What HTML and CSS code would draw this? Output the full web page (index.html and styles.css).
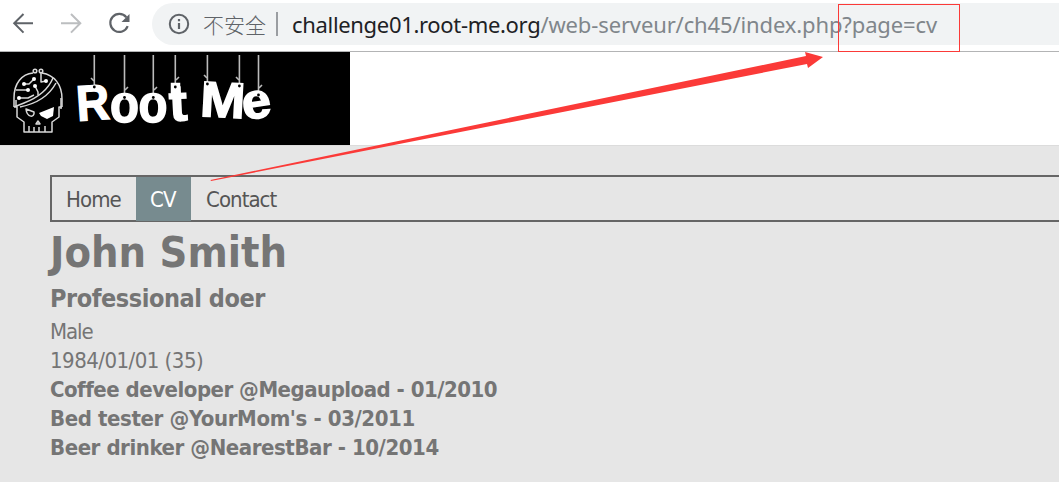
FILE: index.html
```html
<!DOCTYPE html>
<html lang="en">
<head>
<meta charset="utf-8">
<title>Root Me</title>
<link rel="stylesheet" href="styles.css">
</head>
<body>
<div class="toolbar">
  <svg class="tools" width="152" height="51" viewBox="0 0 152 51" fill="none">
    <g stroke="#5f6368" stroke-width="2"><path d="M33 23.3H14.5M23.5 14L14.2 23.3L23.5 32.6"/></g>
    <g stroke="#bcbec0" stroke-width="2"><path d="M61 23.3H80M71 14L80.3 23.3L71 32.6"/></g>
    <path d="M126.3 17.2A9 9 0 1 0 127.7 26.2" stroke="#5f6368" stroke-width="2.2"/>
    <path d="M129.5 14V22H121.5Z" fill="#5f6368"/>
  </svg>
  <div class="address">
    <svg class="info" width="22" height="22" viewBox="0 0 22 22" fill="none" stroke="#5f6368" stroke-width="2"><circle cx="11" cy="11" r="9.2"/><path d="M11 10V16M11 6V8.2" stroke-width="2.2"/></svg>
    <span class="insecure">不安全</span>
    <span class="divider"></span>
    <span class="url"><span class="host">challenge01.root-me.org</span><span class="path">/web-serveur/ch45/index.php?page=cv</span></span>
  </div>
</div>
<header class="banner">
  <svg class="logo" width="350" height="93" viewBox="0 52 350 93">
    <g fill="none" stroke="#d8d8d8" stroke-width="1.5" stroke-linejoin="round">
      <path d="M14 107V98C14 83 22 74 33 73M42 73C54 75 62 84 62 99V107"/>
      <path d="M14 107H17V117L24 122V132H52V122L59 117V107H62M14 107L24 103C37 98 48 90 53 78M20 107C35 104 49 96 56 83"/>
      <circle cx="35" cy="71" r="1.8"/><circle cx="41" cy="71" r="1.8"/>
      <path d="M23 84L29 84L34 79M16 90H28M20 98H28L34 95M41 73V82L46 81M35 86L38 92V95M29 126V132M34 127V132M39 127V132M45 126V132M36 124L38 121L40 124Z"/>
      <path d="M26 109L34 112C35 118 27 118 26 109Z"/>
      <path d="M61 98L61 109M16 100V107"/>
    </g>
    <g fill="#fff"><path d="M39 113L54 107L53 116L47 119L41 116Z"/><circle cx="24" cy="84" r="2"/><circle cx="34" cy="79" r="2"/><circle cx="28" cy="90" r="2"/><circle cx="19" cy="98" r="2"/><circle cx="35" cy="86" r="2"/><circle cx="46" cy="81" r="2"/></g>
    <g class="strings"><path d="M94.3 55V85M124.5 55V96M153.3 55V96M175.3 55V86M207.4 55V83M239.4 55V84M258.5 55V93"/><path d="M91 78l3 3M125 90l3-3M154 90l3-3M176 80l3-3M204 75l3 3M236 77l3 3M259 88l3-3"/></g>
    <g class="letters">
      <text transform="translate(77.5 121) rotate(-4)" font-size="50" textLength="33" lengthAdjust="spacingAndGlyphs">R</text>
      <text x="110" y="122" font-size="51" textLength="29" lengthAdjust="spacingAndGlyphs">o</text>
      <text x="138.500" y="122" font-size="51" textLength="29" lengthAdjust="spacingAndGlyphs">o</text>
      <text transform="translate(170 121) rotate(-3)" font-size="51" textLength="18" lengthAdjust="spacingAndGlyphs">t</text>
      <text transform="translate(199.500 116) rotate(3)" font-size="50" textLength="45" lengthAdjust="spacingAndGlyphs">M</text>
      <text transform="translate(244 120) rotate(-8)" font-size="50" textLength="29" lengthAdjust="spacingAndGlyphs">e</text>
      <rect x="171.500" y="83.500" width="8" height="10"/>
    </g>
    <g><circle cx="94.3" cy="87" r="1.4"/><circle cx="124.5" cy="97.5" r="1.4"/><circle cx="153.3" cy="97.5" r="1.4"/><circle cx="175.3" cy="87" r="1.4"/><circle cx="207.4" cy="84" r="1.4"/><circle cx="239.4" cy="86" r="1.4"/><circle cx="258.5" cy="95" r="1.4"/></g>
  </svg>
</header>
<main class="page">
  <nav class="menu"><a class="home">Home</a><a class="active">CV</a><a class="contact">Contact</a></nav>
  <h1>John Smith</h1>
  <h2>Professional doer</h2>
  <p class="male">Male</p>
  <p class="birth">1984/01/01 (35)</p>
  <p class="job job-a">Coffee developer @Megaupload - 01/2010</p>
  <p class="job job-b">Bed tester @YourMom's - 03/2011</p>
  <p class="job job-c">Beer drinker @NearestBar - 10/2014</p>
</main>
<svg class="annotation" width="1059" height="482" viewBox="0 0 1059 482">
  <rect x="838.5" y="4.5" width="121" height="47" fill="none" stroke="#fb3a38"/>
  <path d="M210.5 180L806 56L805 52L823 57L808 68L807 64L211 181Z" fill="#fb3a38"/>
</svg>
</body>
</html>
```

FILE: styles.css
```css
* { box-sizing: border-box; }
body { margin: 0; height: 482px; overflow: hidden; background: #fff; display: flex; flex-direction: column; font-family: "DejaVu Sans Condensed", "DejaVu Sans", sans-serif; font-stretch: condensed; }
.toolbar { height: 52px; flex: none; display: flex; border-bottom: 1px solid #b3b4b5; }
.tools { flex: none; }
.address { flex: 1; height: 42px; margin-top: 3px; border-radius: 21px 0 0 21px; background: #f1f3f4; display: flex; align-items: center; padding-left: 16px; white-space: nowrap; font-family: "Noto Sans", "Noto Sans CJK SC", sans-serif; font-stretch: normal; }
.info { flex: none; }
.insecure { font-family: "Noto Sans CJK SC", sans-serif; font-weight: 300; font-size: 21px; color: #5f6368; margin-left: 13px; width: 63px; }
.divider { width: 2px; height: 24px; margin-left: 10px; background: #9a9da1; }
.url { margin-left: 14px; font-size: 22px; line-height: 42px; }
.host { color: #202124; letter-spacing: -0.32px; }
.path { color: #80868b; letter-spacing: -0.13px; }
.banner { height: 93px; flex: none; }
.logo { display: block; background: #000; }
.strings { fill: none; stroke: #bbb; stroke-width: 1.6; }
.letters { fill: #fff; stroke: #fff; stroke-width: 1.5; font-family: "Liberation Sans", sans-serif; font-weight: bold; }
.page { flex: 1; background: #e6e6e6; border-top: 1px solid #dcdcdc; padding: 29px 0 0 50px; color: #757575; font-size: 22px; line-height: 29px; white-space: nowrap; }
.menu { height: 47px; border: 2px solid #666; border-right: 0; display: flex; color: #555; line-height: 45px; }
.menu a { height: 44px; }
.home { width: 84px; padding-left: 14px; letter-spacing: -0.9px; }
.active { width: 55px; padding-left: 14px; background: #778b8f; color: #fff; letter-spacing: -0.8px; }
.contact { padding-left: 15px; letter-spacing: -0.95px; }
h1 { margin: 0; font-size: 43px; line-height: 61px; }
h2 { margin: 0 0 2px; font-size: 25px; line-height: 32px; letter-spacing: -0.45px; }
p { margin: 0; }
.male { letter-spacing: -1.1px; }
.birth { letter-spacing: -0.52px; }
.job { font-weight: bold; }
.job-a { letter-spacing: -0.5px; }
.job-b { letter-spacing: -0.39px; }
.job-c { letter-spacing: -0.44px; }
.annotation { position: absolute; left: 0; top: 0; pointer-events: none; }
```
